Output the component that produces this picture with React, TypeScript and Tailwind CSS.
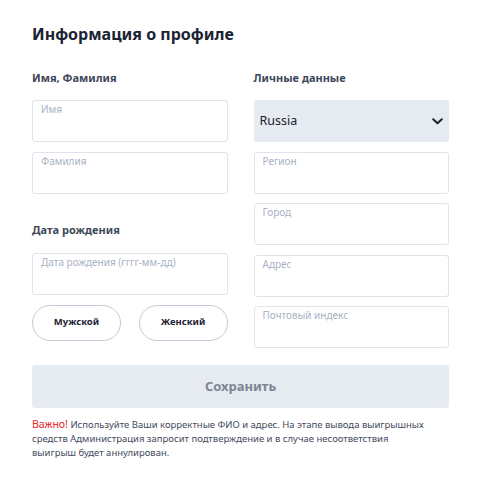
import React from "react";

const font = { fontFamily: '"Noto Sans", "Open Sans", sans-serif' };

function Field({ label }: { label: string }) {
  return (
    <div className="h-[42px] w-full rounded-[3px] border border-[#dfe3ea] bg-white px-[8px] pt-[2px]">
      <span className="block text-[10px] leading-[13px] text-[#a9b3c4]">{label}</span>
    </div>
  );
}

export default function App() {
  return (
    <div className="min-h-[497px] w-[500px] bg-white text-[#1b2233]" style={font}>
      <div className="w-[449px] pl-[32px] pt-[22px]">
        <h1 className="text-[16px] font-bold leading-[24px] text-[#1b2233]">Информация о профиле</h1>
        <div className="mt-[24px] grid grid-cols-2 gap-x-[26px]">
          <div className="flex flex-col">
            <div className="h-[16px] text-[11px] font-bold leading-[16px] text-[#3e4759]">Имя, Фамилия</div>
            <div className="mt-[14px] flex flex-col gap-[9.5px]">
              <Field label="Имя" />
              <Field label="Фамилия" />
            </div>
            <div className="mt-[28px] h-[16px] text-[11px] font-bold leading-[16px] text-[#3e4759]">Дата рождения</div>
            <div className="mt-[15px]">
              <Field label="Дата рождения (гггг-мм-дд)" />
            </div>
            <div className="mt-[10px] flex justify-between">
              <button className="h-[36px] w-[89px] rounded-full border border-[#c3cbd8] bg-white text-[9.5px] font-bold text-[#1b2233]">
                Мужской
              </button>
              <button className="h-[36px] w-[89px] rounded-full border border-[#c3cbd8] bg-white text-[9.5px] font-bold text-[#1b2233]">
                Женский
              </button>
            </div>
          </div>
          <div className="flex flex-col">
            <div className="h-[16px] text-[11px] font-bold leading-[16px] text-[#3e4759]">Личные данные</div>
            <div className="mt-[14px] flex flex-col gap-[9.5px]">
              <div className="flex h-[42px] w-full items-center justify-between rounded-[3px] bg-[#e6eaf1] pl-[6px] pr-[6px]">
                <span className="text-[12.5px] text-[#1b2233]">Russia</span>
                <svg width="11" height="7" viewBox="0 0 11 7" fill="none">
                  <path d="M1.2 1.2 L5.5 5.3 L9.8 1.2" stroke="#1b2233" strokeWidth="2" strokeLinecap="round" strokeLinejoin="round" />
                </svg>
              </div>
              <Field label="Регион" />
              <Field label="Город" />
              <Field label="Адрес" />
              <Field label="Почтовый индекс" />
            </div>
          </div>
        </div>
        <button className="mt-[17px] flex h-[43px] w-full items-center justify-center rounded-[3px] bg-[#e6eaf1] text-[13px] font-bold text-[#7d8494]">
          Сохранить
        </button>
        <p className="mt-[9px] w-[417px] text-[9.5px] leading-[14px] text-[#434b5c]">
          <span className="text-[10.5px] text-[#e5262b]">Важно!</span> Используйте Ваши корректные ФИО и адрес. На этапе вывода выигрышных
          <br />
          средств Администрация запросит подтверждение и в случае несоответствия
          <br />
          выигрыш будет аннулирован.
        </p>
      </div>
    </div>
  );
}
